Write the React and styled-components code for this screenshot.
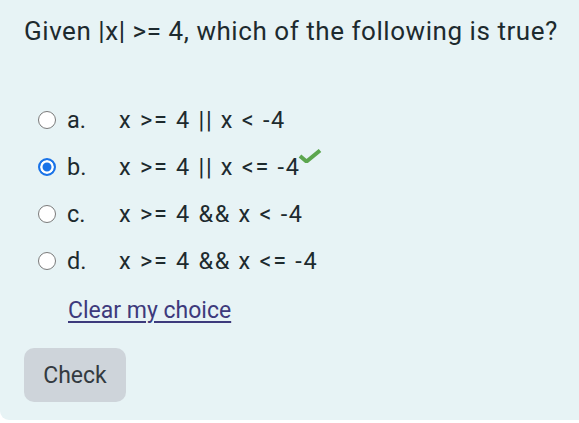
import React from 'react';
import styled, { createGlobalStyle } from 'styled-components';

const GlobalStyle = createGlobalStyle`
  html, body {
    margin: 0;
    padding: 0;
    background: #ffffff;
    overflow: hidden;
  }
  body {
    font-family: Roboto, "Liberation Sans", sans-serif;
  }
`;

const answers = [
  { letter: 'a.', text: 'x >= 4 || x < -4' },
  { letter: 'b.', text: 'x >= 4 || x <= -4', selected: true, correct: true },
  { letter: 'c.', text: 'x >= 4 && x < -4' },
  { letter: 'd.', text: 'x >= 4 && x <= -4' }
];

const App = () => (
  <React.Fragment>
    <GlobalStyle />
    <Panel>
      <QuestionText>Given |x| &gt;= 4, which of the following is true?</QuestionText>
      <AnswerList>
        {answers.map((answer, index) =>
          <AnswerRow key={index}>
            <Radio selected={answer.selected} />
            <Letter>{answer.letter}</Letter>
            <AnswerText>
              {answer.text}
              {answer.correct && <Tick />}
            </AnswerText>
          </AnswerRow>
        )}
      </AnswerList>
      <ClearLink href="#">Clear my choice</ClearLink>
      <CheckButton>Check</CheckButton>
    </Panel>
  </React.Fragment>
);

export default App;

const Tick = () => (
  <TickIcon viewBox="0 0 24 14" width="24" height="14">
    <path d="M2 7 L8.5 12.5 L22 1.5" fill="none" stroke="#5ca64e" strokeWidth="4" />
  </TickIcon>
);

const Panel = styled.div`
  box-sizing: border-box;
  width: 600px;
  height: 420px;
  background: #e7f3f5;
  border-bottom-left-radius: 9px;
  padding: 14px 0 0 24px;
  display: flex;
  flex-direction: column;
  align-items: flex-start;
  color: #1d2125;
`;

const QuestionText = styled.div`
  font-size: 26px;
  letter-spacing: 0.55px;
  line-height: 34px;
  color: #1d2a2e;
`;

const AnswerList = styled.div`
  display: flex;
  flex-direction: column;
  gap: 11px;
  margin-top: 54px;
  padding-left: 14px;
`;

const AnswerRow = styled.div`
  display: flex;
  align-items: center;
  height: 36px;
  font-size: 23.5px;
  color: #1d2a2e;
`;

const Radio = styled.span`
  box-sizing: border-box;
  width: 18px;
  height: 18px;
  border-radius: 50%;
  border: ${props => props.selected ? '2px solid #1a73e8' : '1.5px solid #7a7a7a'};
  box-shadow: ${props => props.selected ? 'inset 0 0 0 2.5px #ffffff' : 'none'};
  background-color: ${props => props.selected ? '#1a73e8' : '#ffffff'};
  margin-right: 11px;
  flex-shrink: 0;
`;

const Letter = styled.span`
  width: 52px;
`;

const AnswerText = styled.span`
  position: relative;
  white-space: pre;
  letter-spacing: 1.7px;
`;

const TickIcon = styled.svg`
  position: absolute;
  right: -21px;
  top: -4px;
`;

const ClearLink = styled.a`
  margin-top: 17px;
  margin-left: 44px;
  font-size: 23px;
  line-height: 30px;
  color: #3d3a7c;
  text-decoration: underline;
  text-underline-offset: 3px;
  text-decoration-thickness: 1.5px;
`;

const CheckButton = styled.button`
  margin-top: 22px;
  width: 102px;
  height: 54px;
  border: none;
  border-radius: 10px;
  background: #ced4da;
  color: #333a40;
  font-family: Roboto, "Liberation Sans", sans-serif;
  font-size: 23px;
  padding: 0;
`;
